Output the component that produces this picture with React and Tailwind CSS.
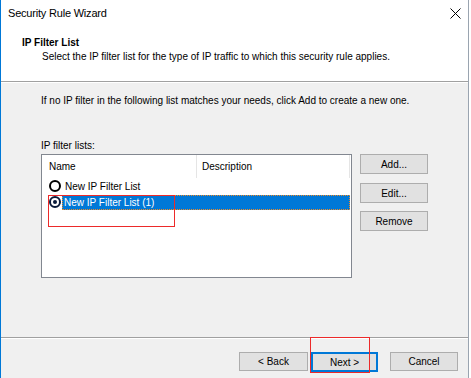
export default function App() {
  const font = { fontFamily: '"Liberation Sans", Arial, sans-serif' };
  return (
    <div className="relative w-[471px] h-[378px] overflow-hidden bg-white flex text-[10px] text-black" style={font}>
      <div className="w-[469px] h-full border-l border-[#0078d7] border-r border-r-[#9aa4b0] bg-[#f0f0f0] flex flex-col">
        {/* header */}
        <div className="h-[81px] bg-white flex flex-col">
          <div className="h-[26px] flex items-center pl-[7px] pr-[7px] justify-between">
            <span className="text-[11px] leading-[14px] tracking-[-0.2px]">Security Rule Wizard</span>
            <svg width="11" height="11" viewBox="0 0 11 11">
              <path d="M0.5 0.5 L10.5 10.5 M10.5 0.5 L0.5 10.5" stroke="#000" strokeWidth="1" />
            </svg>
          </div>
          <div className="mt-[10px] pl-[21px] font-bold leading-[14px]">IP Filter List</div>
          <div className="pl-[41px] leading-[14px]">Select the IP filter list for the type of IP traffic to which this security rule applies.</div>
        </div>
        <div className="h-px bg-[#a0a0a0]" />
        <div className="h-px bg-white" />
        {/* body */}
        <div className="h-[254px] flex flex-col pl-[40px]">
          <div className="mt-[11px] leading-[14px]">If no IP filter in the following list matches your needs, click Add to create a new one.</div>
          <div className="mt-[31px] leading-[14px]">IP filter lists:</div>
          <div className="mt-[1px] flex">
            <div className="w-[311px] h-[124px] bg-white border border-[#828790] flex flex-col">
              <div className="h-[23px] flex items-stretch">
                <div className="w-[155px] flex items-center pl-[7px] border-r border-[#e5e5e5]">Name</div>
                <div className="flex-1 flex items-center pl-[5px] border-r border-[#e5e5e5] mr-[1px]">Description</div>
              </div>
              <div className="h-[16px] flex items-center pl-[7px]">
                <span className="w-[12px] h-[12px] rounded-full border-2 border-black bg-white" />
                <span className="ml-[3px] pl-[1px]">New IP Filter List</span>
              </div>
              <div className="h-[16px] flex items-center pl-[7px]">
                <span className="w-[12px] h-[12px] rounded-full border-2 border-[#0a1a3a] bg-white flex items-center justify-center">
                  <span className="w-[4px] h-[4px] rounded-full bg-[#0a1a3a]" />
                </span>
                <span className="ml-[1px] flex-1 mr-[1px] h-[15px] bg-[#0078d7] text-white flex items-center pl-[2px] outline outline-1 outline-dotted outline-[#f08a24] -outline-offset-1">New IP Filter List (1)</span>
              </div>
            </div>
            <div className="ml-[8px] flex flex-col">
              <button className="w-[68px] h-[20px] bg-[#e1e1e1] border border-[#adadad]">Add...</button>
              <button className="mt-[9px] w-[68px] h-[20px] bg-[#e1e1e1] border border-[#adadad]">Edit...</button>
              <button className="mt-[8px] w-[68px] h-[20px] bg-[#e1e1e1] border border-[#adadad]">Remove</button>
            </div>
          </div>
        </div>
        <div className="h-px bg-[#a0a0a0]" />
        <div className="h-px bg-white" />
        {/* footer */}
        <div className="flex-1 flex items-start pl-[238px] pt-[13px]">
          <button className="w-[69px] h-[19px] bg-[#e1e1e1] border border-[#adadad]">&lt; Back</button>
          <button className="ml-[3px] w-[67px] h-[20px] bg-[#e1e1e1] border-2 border-[#0078d7]">Next &gt;</button>
          <button className="ml-[12px] w-[68px] h-[19px] bg-[#e1e1e1] border border-[#adadad]">Cancel</button>
        </div>
      </div>
      <div className="flex-1 bg-white" />
      {/* annotations */}
      <div className="absolute left-[48px] top-[195px] w-[127px] h-[32px] border border-[#ec2a2a]" />
      <div className="absolute left-[310px] top-[337px] w-[60px] h-[36px] border border-[#ec2a2a]" />
    </div>
  );
}
